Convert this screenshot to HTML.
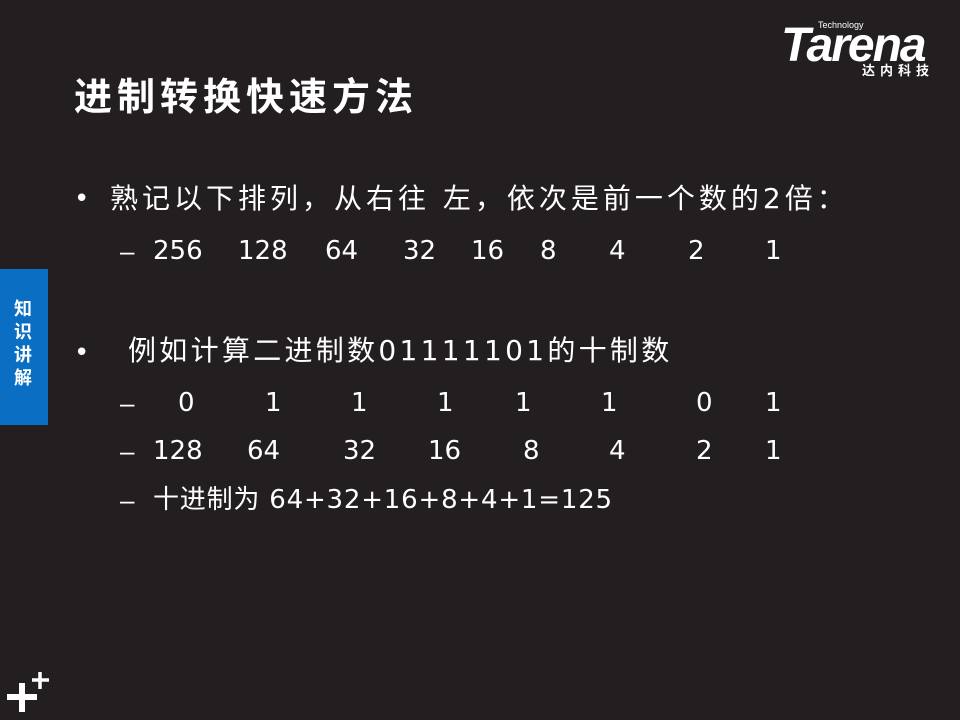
<!DOCTYPE html>
<html><head><meta charset="utf-8"><style>
body{margin:0;width:960px;height:720px;background:#231f20;overflow:hidden;position:relative;font-family:"DejaVu Sans","Noto Sans CJK SC",sans-serif;color:#fff}
.a{position:absolute;white-space:nowrap;line-height:1}
.t{font-size:26px}
.d{font-family:"Liberation Sans",sans-serif}
</style></head><body>
<div class="a" style="left:74px;top:78px;font-size:38px;font-weight:bold;letter-spacing:5px">进制转换快速方法</div>
<div class="a" style="left:781px;top:22px;font-size:48px;font-weight:bold;font-style:italic;letter-spacing:-2px;font-family:'Liberation Sans',sans-serif">Tarena</div>
<div class="a" style="left:818px;top:21px;font-size:9px;font-family:'Liberation Sans',sans-serif">Technology</div>
<div class="a" style="left:862px;top:65px;font-size:13px;font-weight:bold;letter-spacing:5px">达内科技</div>
<div class="a" style="left:0;top:269px;width:48px;height:156px;background:#0a6fc2"></div>
<div class="a" style="left:14px;top:298px;font-size:18px;font-weight:bold;line-height:23px;width:20px">知<br>识<br>讲<br>解</div>
<div class="a t" style="left:74px;top:186px">•</div>
<div class="a" style="left:110px;top:185px;font-size:28px;letter-spacing:4px">熟记以下排列，从右往 左，依次是前一个数的2倍：</div>
<div class="a t d" style="left:120px;top:238px">–</div>
<div class="a t" style="left:153px;top:238px">256</div><div class="a t" style="left:238px;top:238px">128</div><div class="a t" style="left:325px;top:238px">64</div><div class="a t" style="left:403px;top:238px">32</div><div class="a t" style="left:471px;top:238px">16</div><div class="a t" style="left:540px;top:238px">8</div><div class="a t" style="left:609px;top:238px">4</div><div class="a t" style="left:688px;top:238px">2</div><div class="a t" style="left:765px;top:238px">1</div>
<div class="a t" style="left:74px;top:340px">•</div>
<div class="a" style="left:128px;top:337px;font-size:28px;letter-spacing:3.3px">例如计算二进制数01111101的十制数</div>
<div class="a t d" style="left:120px;top:390px">–</div>
<div class="a t" style="left:178px;top:390px">0</div><div class="a t" style="left:265px;top:390px">1</div><div class="a t" style="left:351px;top:390px">1</div><div class="a t" style="left:437px;top:390px">1</div><div class="a t" style="left:515px;top:390px">1</div><div class="a t" style="left:601px;top:390px">1</div><div class="a t" style="left:696px;top:390px">0</div><div class="a t" style="left:765px;top:390px">1</div>
<div class="a t d" style="left:120px;top:438px">–</div>
<div class="a t" style="left:153px;top:438px">128</div><div class="a t" style="left:247px;top:438px">64</div><div class="a t" style="left:343px;top:438px">32</div><div class="a t" style="left:428px;top:438px">16</div><div class="a t" style="left:523px;top:438px">8</div><div class="a t" style="left:609px;top:438px">4</div><div class="a t" style="left:696px;top:438px">2</div><div class="a t" style="left:765px;top:438px">1</div>
<div class="a t d" style="left:120px;top:487px">–</div>
<div class="a t" style="left:153px;top:487px;letter-spacing:0.8px">十进制为 64+32+16+8+4+1=125</div>
<svg class="a" style="left:0;top:660px" width="60" height="60"><path d="M7 697H37M22 683V712" transform="translate(0,-660)" stroke="#fff" stroke-width="6" fill="none"/><path d="M32 680H49M40 672V689" transform="translate(0,-660)" stroke="#fff" stroke-width="3.5" fill="none"/></svg>
</body></html>
